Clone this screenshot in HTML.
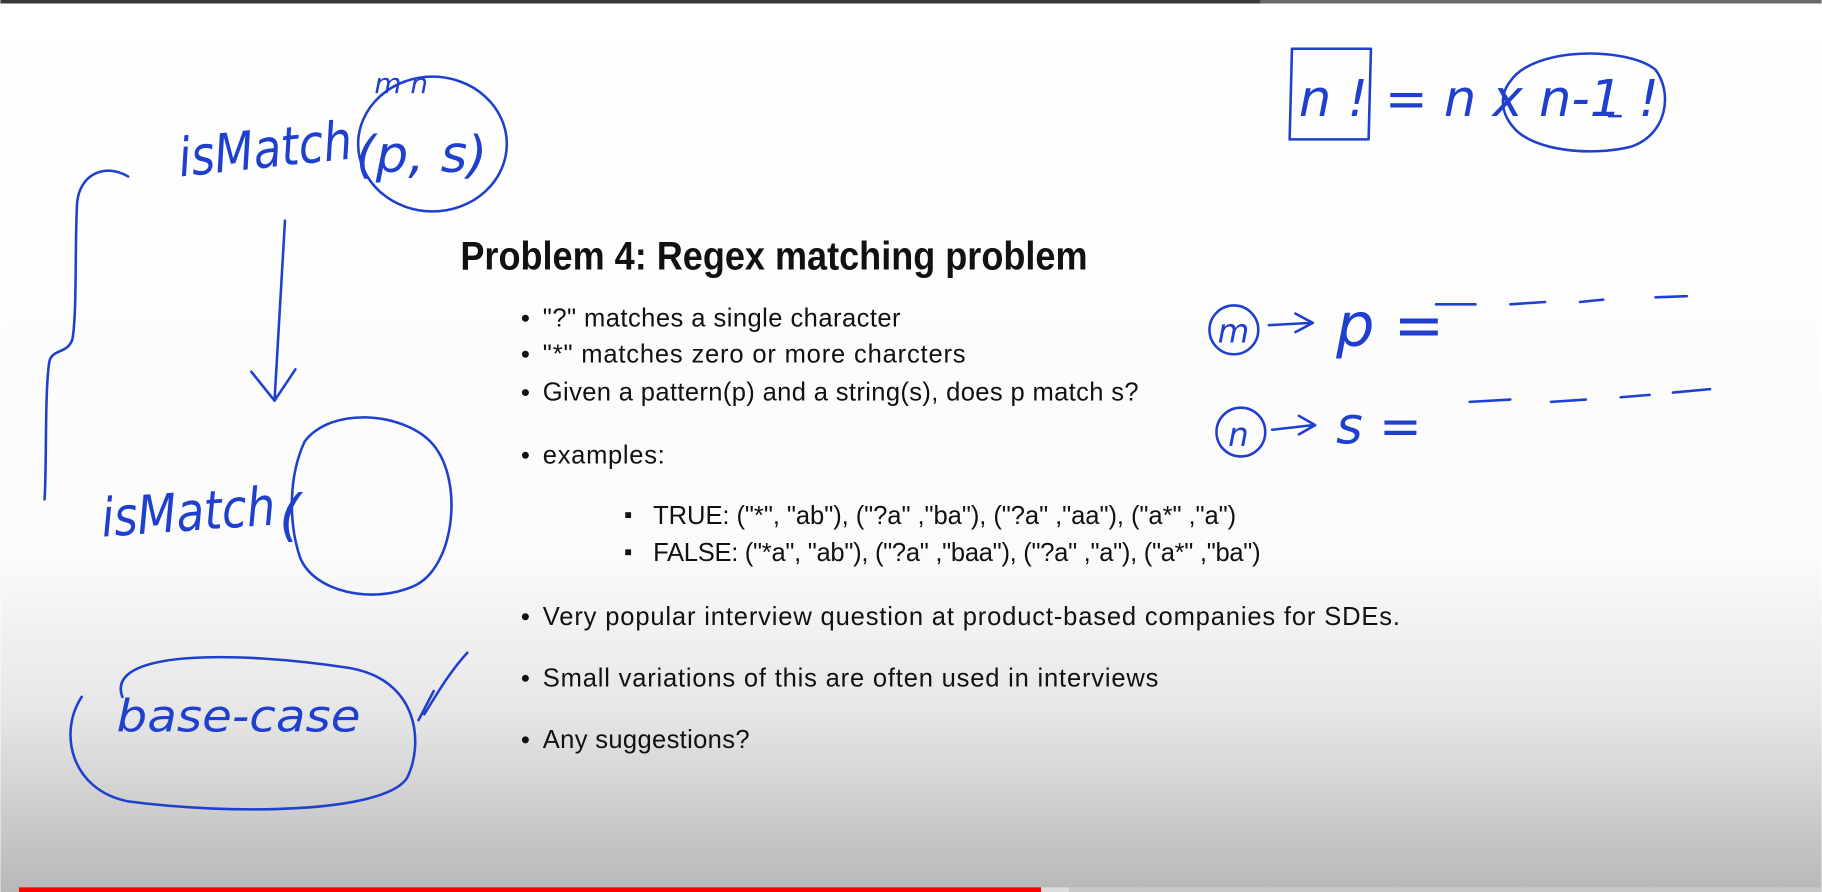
<!DOCTYPE html>
<html><head><meta charset="utf-8"><style>
html,body{margin:0;padding:0;width:1822px;height:892px;overflow:hidden;background:#fff}
svg{display:block}
</style></head><body>
<svg width="1822" height="892" viewBox="0 0 1568 768" xmlns="http://www.w3.org/2000/svg">
<defs><linearGradient id="g" x1="0" y1="0" x2="0" y2="1">
<stop offset="0" stop-color="#ffffff"/><stop offset="0.62" stop-color="#fbfbfb"/><stop offset="0.8" stop-color="#e6e6e6"/><stop offset="1" stop-color="#b8b8b8"/></linearGradient></defs>
<rect width="1568" height="768" fill="url(#g)"/>
<rect width="1085" height="3" fill="#3a3a3a"/><rect x="1085" width="483" height="3" fill="#6a6a6a"/>
<rect x="16" y="764" width="880" height="4" fill="#f00"/><rect x="896" y="764" width="24" height="4" fill="#ddd"/><rect x="920" y="764" width="648" height="4" fill="#c8c8c8"/>
<g font-family="Liberation Sans, sans-serif" fill="#111">
<text x="396" y="232" font-size="34" font-weight="bold" textLength="540" lengthAdjust="spacingAndGlyphs">Problem 4: Regex matching problem</text>
<g font-size="22" lengthAdjust="spacingAndGlyphs">
<text x="467" y="281" textLength="308">"?" matches a single character</text>
<text x="467" y="312" textLength="364">"*" matches zero or more charcters</text>
<text x="467" y="345" textLength="513">Given a pattern(p) and a string(s), does p match s?</text>
<text x="467" y="399" textLength="105">examples:</text>
<text x="562" y="451" textLength="502">TRUE: ("*", "ab"), ("?a" ,"ba"), ("?a" ,"aa"), ("a*" ,"a")</text>
<text x="562" y="483" textLength="523">FALSE: ("*a", "ab"), ("?a" ,"baa"), ("?a" ,"a"), ("a*" ,"ba")</text>
<text x="467" y="538" textLength="738">Very popular interview question at product-based companies for SDEs.</text>
<text x="467" y="591" textLength="530">Small variations of this are often used in interviews</text>
<text x="467" y="644" textLength="178">Any suggestions?</text>
</g>
<g>
<circle cx="452" cy="274" r="3"/><circle cx="452" cy="305" r="3"/><circle cx="452" cy="338" r="3"/><circle cx="452" cy="392" r="3"/>
<rect x="538" y="441" width="5" height="5"/><rect x="538" y="473" width="5" height="5"/>
<circle cx="452" cy="531" r="3"/><circle cx="452" cy="584" r="3"/><circle cx="452" cy="637" r="3"/>
</g>
</g>
<g fill="none" stroke="#1f3fcf" stroke-width="2.2" stroke-linecap="round" stroke-linejoin="round">
<ellipse cx="372" cy="124" rx="64" ry="58"/>
<path d="M110 152 C90 140 68 150 66 175 C64 210 66 270 62 292 C58 305 44 300 42 312 C38 340 40 400 38 430"/>
<path d="M245 190 L236 345 M216 320 L236 345 L254 318"/>
<path d="M262 380 C285 350 345 355 370 380 C400 410 392 490 355 505 C320 520 270 510 258 480 C248 450 248 410 262 380"/>
<path d="M105 600 C90 560 200 560 300 575 C360 585 365 640 350 670 C330 700 200 702 110 690 C60 680 50 630 70 600"/>
<path d="M360 620 L373 595 M365 615 C380 590 390 575 402 562"/>
<path d="M1112 42 L1180 42 L1178 120 L1110 120 Z"/>
<path d="M1300 70 C1320 40 1400 40 1425 60 C1440 80 1435 115 1405 126 C1370 135 1320 130 1303 110 C1290 95 1292 80 1300 70"/>
<circle cx="1062" cy="284" r="21"/><circle cx="1068" cy="372" r="21"/>
<path d="M1092 280 L1128 278 M1115 270 L1130 278 L1115 286"/>
<path d="M1095 370 L1130 366 M1118 358 L1132 366 L1118 374"/>
<path d="M1236 262 L1270 262 M1300 262 L1330 260 M1360 260 L1380 258 M1425 256 L1452 255"/>
<path d="M1265 346 L1300 344 M1335 346 L1365 344 M1395 342 L1420 340 M1440 338 L1472 335"/>
<path d="M1385 100 L1395 100"/>
</g>
<g fill="#1f3fcf" font-family="DejaVu Sans, sans-serif" font-style="italic">
<text x="155" y="152" font-size="46" transform="rotate(-6 155 152)" textLength="150" lengthAdjust="spacingAndGlyphs">isMatch</text>
<text x="306" y="148" font-size="44">(p, s)</text>
<text x="322" y="80" font-size="24">m n</text>
<text x="88" y="462" font-size="46" transform="rotate(-4 88 462)" textLength="150" lengthAdjust="spacingAndGlyphs">isMatch</text>
<text x="240" y="460" font-size="48">(</text>
<text x="100" y="630" font-size="38" textLength="210" lengthAdjust="spacingAndGlyphs">base-case</text>
<text x="1118" y="100" font-size="44">n !</text>
<text x="1192" y="100" font-size="44" textLength="236" lengthAdjust="spacingAndGlyphs">= n x n-1 !</text>
<text x="1048" y="295" font-size="28">m</text>
<text x="1057" y="384" font-size="28">n</text>
<text x="1150" y="298" font-size="52">p =</text>
<text x="1150" y="382" font-size="44">s =</text>
</g>
</svg>
</body></html>
